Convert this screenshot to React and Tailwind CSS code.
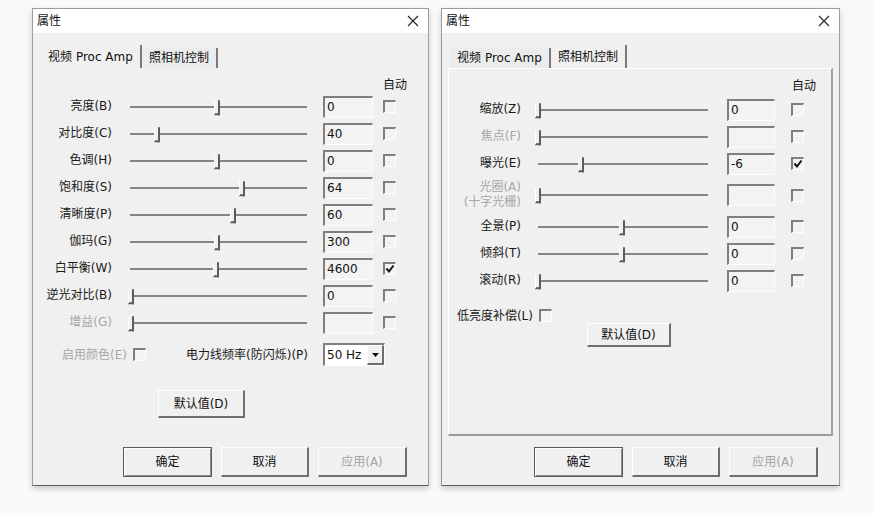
// classic sunken / raised edges
const sunken =
  "border-t-2 border-l-2 border-r border-b border-t-[#7f7f7f] border-l-[#7f7f7f] border-r-[#fdfdfd] border-b-[#fdfdfd]";
const raised =
  "border-t border-l border-r-2 border-b-2 border-t-[#ffffff] border-l-[#ffffff] border-r-[#6e6e6e] border-b-[#6e6e6e]";

const videoRows = [
  { label: "亮度(B)", pos: 0.51, value: "0" },
  { label: "对比度(C)", pos: 0.17, value: "40" },
  { label: "色调(H)", pos: 0.51, value: "0" },
  { label: "饱和度(S)", pos: 0.65, value: "64" },
  { label: "清晰度(P)", pos: 0.6, value: "60" },
  { label: "伽玛(G)", pos: 0.51, value: "300" },
  { label: "白平衡(W)", pos: 0.5, value: "4600", auto: true },
  { label: "逆光对比(B)", pos: 0.02, value: "0" },
  { label: "增益(G)", pos: 0.02, value: "", disabled: true },
];

const cameraRows = [
  { label: "缩放(Z)", pos: 0.02, value: "0" },
  { label: "焦点(F)", pos: 0.02, value: "", disabled: true },
  { label: "曝光(E)", pos: 0.27, value: "-6", auto: true },
  { label: "光圈(A)", sub: "(十字光栅)", pos: 0.02, value: "", disabled: true, tall: true },
  { label: "全景(P)", pos: 0.51, value: "0" },
  { label: "倾斜(T)", pos: 0.51, value: "0" },
  { label: "滚动(R)", pos: 0.02, value: "0" },
];

function CloseIcon() {
  return (
    <svg width="12" height="12" viewBox="0 0 12 12">
      <path d="M1 1 L11 11 M11 1 L1 11" stroke="#222" strokeWidth="1.1" fill="none" />
    </svg>
  );
}

function CheckBox({ checked }) {
  return (
    <div className={`relative h-[13px] w-[13px] shrink-0 bg-[#f3f3f3] ${sunken}`}>
      {checked && (
        <svg className="absolute -left-[1px] -top-[1px]" width="12" height="12" viewBox="0 0 12 12">
          <path d="M2.5 5.5 L5 8.5 L9.5 2.5" stroke="#111" strokeWidth="2" fill="none" />
        </svg>
      )}
    </div>
  );
}

function Slider({ pos }) {
  return (
    <div className="relative flex h-full items-center">
      <div className="h-[2px] w-full bg-[#858585]" />
      <div
        className="absolute top-1/2 h-[15px] w-[6px] -translate-y-[45%] border-r-2 border-b-2 border-l border-r-[#5c5c5c] border-b-[#5c5c5c] border-l-white bg-[#f0f0f0]"
        style={{ left: `calc(${pos * 100}% - 6px)` }}
      />
    </div>
  );
}

function ValueBox({ value, width }) {
  return (
    <div className={`h-[22px] shrink-0 bg-[#f3f3f3] pl-[2px] text-[12px] leading-[19px] text-[#111] ${sunken} ${width}`}>
      {value}
    </div>
  );
}

function Button({ children, className = "", disabled, primary }) {
  return (
    <button
      className={`flex items-center justify-center bg-[#f0f0f0] text-[12px] ${
        primary
          ? "border border-[#5a5a5a] shadow-[inset_1px_1px_0_#ffffff,inset_-1px_-1px_0_#8c8c8c]"
          : raised
      } ${disabled ? "text-[#a3a3a3]" : "text-[#111]"} ${className}`}
    >
      {children}
    </button>
  );
}

function ControlRow({ row, cols }) {
  return (
    <div className={`flex items-center ${row.tall ? "h-[36px]" : "h-[27px]"}`}>
      <div
        className={`w-[72px] shrink-0 text-right text-[12px] leading-[15px] ${
          row.disabled ? "text-[#a6a6a6]" : "text-[#1a1a1a]"
        }`}
      >
        <div>{row.label}</div>
        {row.sub && <div>{row.sub}</div>}
      </div>
      <div className={`h-full shrink-0 ${cols.slider}`}>
        <Slider pos={row.pos} />
      </div>
      <ValueBox value={row.value} width={cols.box} />
      <div className={cols.check}>
        <CheckBox checked={row.auto} />
      </div>
    </div>
  );
}

function Tabs({ active }) {
  const tabs = [
    { name: "视频 Proc Amp", w: "w-[101px]" },
    { name: "照相机控制", w: "w-[76px]" },
  ];
  return (
    <div className="flex h-[23px] items-end pl-[8px]">
      {tabs.map((t, i) => (
        <div
          key={t.name}
          className={`flex items-center justify-center border-r-2 border-r-[#7a7a7a] text-[12px] text-[#111] ${t.w} ${
            i === active ? "h-[23px] bg-[#f0f0f0]" : "h-[20px] bg-[#ececec]"
          }`}
        >
          {t.name}
        </div>
      ))}
    </div>
  );
}

function Dialog({ width, children, active, framed }) {
  return (
    <div
      className={`flex h-[478px] shrink-0 flex-col border border-[#9c9c9c] border-b-[#5e5e5e] bg-[#f0f0f0] shadow-[0_3px_6px_rgba(0,0,0,0.18)] ${width}`}
    >
      <div className="flex h-[24px] items-center justify-between bg-white pl-[4px] pr-[9px]">
        <span className="text-[12px] text-[#111]">属性</span>
        <CloseIcon />
      </div>
      <div className="pt-[12px]">
        <Tabs active={active} />
      </div>
      <div
        className={`mx-[6px] h-[368px] ${
          framed
            ? "border-t border-l border-r-2 border-b-2 border-t-white border-l-white border-r-[#a2a2a2] border-b-[#9a9a9a]"
            : ""
        }`}
      >
        {children}
      </div>
      <div className="flex justify-end gap-[9px] pr-[21px] pt-[11px]">
        <Button primary className="h-[30px] w-[89px]">确定</Button>
        <Button className="h-[30px] w-[88px]">取消</Button>
        <Button disabled className="h-[30px] w-[89px]">应用(A)</Button>
      </div>
    </div>
  );
}

function VideoPanel() {
  const cols = { slider: "ml-[18px] mr-[16px] w-[177px]", box: "w-[50px]", check: "ml-[10px]" };
  return (
    <div className="flex flex-col pl-[1px] pt-[8px]">
      <div className="flex h-[17px] items-center pl-[343px] text-[12px] text-[#111]">自动</div>
      {videoRows.map((r) => (
        <ControlRow key={r.label} row={r} cols={cols} />
      ))}
      <div className="mt-[7px] flex h-[23px] items-center text-[12px]">
        <span className="w-[87px] shrink-0 text-right text-[#a6a6a6]">启用颜色(E)</span>
        <div className="ml-[6px]">
          <CheckBox />
        </div>
        <span className="w-[162px] shrink-0 text-right text-[#1a1a1a]">电力线频率(防闪烁)(P)</span>
        <div className={`ml-[15px] flex h-[23px] w-[62px] items-center justify-between bg-white ${sunken}`}>
          <span className="pl-[2px] text-[#111]">50 Hz</span>
          <div className={`flex h-full w-[17px] items-center justify-center bg-[#f0f0f0] ${raised}`}>
            <svg width="7" height="4" viewBox="0 0 7 4">
              <path d="M0 0 L7 0 L3.5 4 Z" fill="#111" />
            </svg>
          </div>
        </div>
      </div>
      <div className="mt-[24px] pl-[118px]">
        <Button className="h-[28px] w-[87px]">默认值(D)</Button>
      </div>
    </div>
  );
}

function CameraPanel() {
  const cols = { slider: "ml-[17px] mr-[19px] w-[170px]", box: "w-[48px]", check: "ml-[16px]" };
  return (
    <div className="flex flex-col pt-[7px]">
      <div className="flex h-[20px] items-center pl-[343px] text-[12px] text-[#111]">自动</div>
      {cameraRows.map((r) => (
        <ControlRow key={r.label} row={r} cols={cols} />
      ))}
      <div className="mt-[14px] flex h-[15px] items-center text-[12px]">
        <span className="w-[84px] shrink-0 text-right text-[#1a1a1a]">低亮度补偿(L)</span>
        <div className="ml-[6px]">
          <CheckBox />
        </div>
      </div>
      <div className="pl-[138px]">
        <Button className="h-[24px] w-[84px]">默认值(D)</Button>
      </div>
    </div>
  );
}

export default function App() {
  return (
    <div className="h-[513px] w-[873px] overflow-hidden bg-[#f9f9f9] font-['DejaVu_Sans','Noto_Sans_CJK_SC',sans-serif]">
      <div className="flex gap-[12px] pl-[32px] pt-[8px]">
        <Dialog width="w-[397px]" active={0}>
          <VideoPanel />
        </Dialog>
        <Dialog width="w-[399px]" active={1} framed>
          <CameraPanel />
        </Dialog>
      </div>
    </div>
  );
}
